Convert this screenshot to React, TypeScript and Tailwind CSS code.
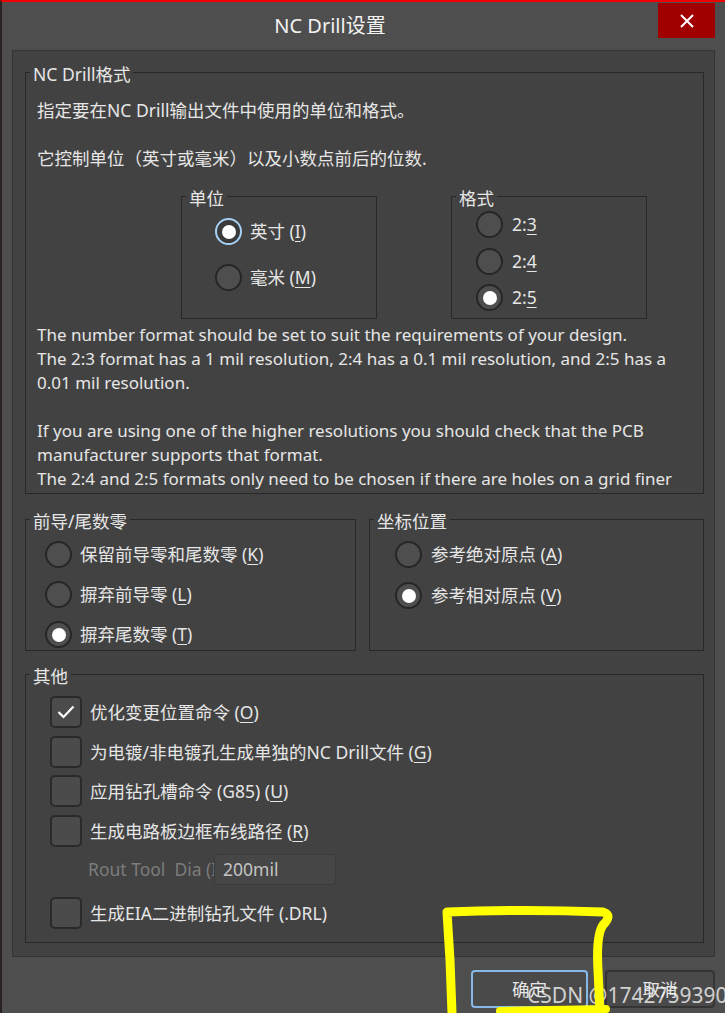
const FONT = "font-['Noto_Sans','Noto_Sans_CJK_SC',sans-serif]";

type Mn = { text: string; k?: string; pre?: string };

const Key = ({ text, k, pre }: Mn) => (
    <span className="whitespace-nowrap">
        {text}
        {k && (
            <>
                {pre ?? " ("}
                <span className="underline underline-offset-[3px] decoration-1">{k}</span>
                {pre === undefined ? ")" : ""}
            </>
        )}
    </span>
);

const Radio = ({ checked, focus }: { checked?: boolean; focus?: boolean }) => (
    <span
        className={`w-[27px] h-[27px] shrink-0 rounded-full border-2 flex items-center justify-center ${
            focus ? "border-[#a6d0f4] bg-[#3a3a3a]" : "border-[#262626] bg-[#4e4e4e]"
        }`}
    >
        {checked && <span className="w-[14px] h-[14px] rounded-full bg-white" />}
    </span>
);

const Check = ({ checked }: { checked?: boolean }) => (
    <span className="w-[32px] h-[32px] shrink-0 rounded-[5px] border-2 border-[#2a2a2a] bg-[#4b4b4b] flex items-center justify-center">
        {checked && (
            <svg width="18" height="14" viewBox="0 0 18 14">
                <polyline points="1.5,7 6.5,12 16.5,1.5" fill="none" stroke="white" strokeWidth="2.2" />
            </svg>
        )}
    </span>
);

// group box: fieldset has no padding so the legend sits 8px from the left edge
const Group = ({
    title,
    className,
    pad,
    children,
}: {
    title: string;
    className: string;
    pad: string;
    children?: React.ReactNode;
}) => (
    <fieldset className={`border border-[#282828] min-w-0 ${className}`}>
        <legend className="ml-[4px] px-[3px] text-[17.5px] leading-[20px] relative top-[2px]">{title}</legend>
        <div className={pad}>{children}</div>
    </fieldset>
);

export default function App() {
    return (
        <div
            className={`relative w-[725px] h-[1013px] overflow-hidden bg-[#4e4e4e] border-t-2 border-t-[#f00000] border-l-2 border-l-[#2a2222] text-[#e6e6e6] ${FONT}`}
        >
            {/* title bar */}
            <div className="flex h-[48px]">
                <div className="flex-1 flex items-center justify-center text-[20px] text-[#f2f2f2]">NC Drill设置</div>
                <button className="mt-[1px] mr-[10px] w-[57px] h-[35px] bg-[#a10000] flex items-center justify-center">
                    <svg width="14" height="14" viewBox="0 0 14 14">
                        <path d="M1 1L13 13M13 1L1 13" stroke="white" strokeWidth="2" />
                    </svg>
                </button>
            </div>

            {/* main panel */}
            <div className="ml-[10px] mr-[10px] h-[907px] bg-[#424242] border border-[#343434] pl-[12px] pr-[10px] pt-[11px] flex flex-col">
                <Group title="NC Drill格式" className="h-[432px]" pad="px-[11px]">
                    <div className="pt-[16px] text-[17.5px] leading-[24px]">
                        <div>指定要在NC Drill输出文件中使用的单位和格式。</div>
                        <div>&nbsp;</div>
                        <div>它控制单位（英寸或毫米）以及小数点前后的位数.</div>
                    </div>
                    <div className="flex mt-[16px] ml-[144px] gap-[74px] text-[17.5px]">
                        <Group title="单位" className="w-[196px] h-[133px]" pad="pl-[33px]">
                            <div className="flex flex-col gap-[19px] mt-[12px]">
                                <label className="flex items-center gap-[8px] h-[27px]">
                                    <Radio checked focus />
                                    <Key text="英寸" k="I" />
                                </label>
                                <label className="flex items-center gap-[8px] h-[27px]">
                                    <Radio />
                                    <Key text="毫米" k="M" />
                                </label>
                            </div>
                        </Group>
                        <Group title="格式" className="w-[196px] h-[133px]" pad="pl-[24px]">
                            <div className="flex flex-col gap-[9.5px] mt-[5px]">
                                {["3", "4", "5"].map((d) => (
                                    <label key={d} className="flex items-center gap-[9px] h-[27px]">
                                        <Radio checked={d === "5"} />
                                        <Key text="2:" k={d} pre="" />
                                    </label>
                                ))}
                            </div>
                        </Group>
                    </div>
                    <div className="mt-[4px] h-[168px] overflow-hidden text-[17px] leading-[24px] whitespace-pre">
                        <div>The number format should be set to suit the requirements of your design.</div>
                        <div>The 2:3 format has a 1 mil resolution, 2:4 has a 0.1 mil resolution, and 2:5 has a</div>
                        <div>0.01 mil resolution.</div>
                        <div> </div>
                        <div>If you are using one of the higher resolutions you should check that the PCB</div>
                        <div>manufacturer supports that format.</div>
                        <div>The 2:4 and 2:5 formats only need to be chosen if there are holes on a grid finer</div>
                    </div>
                </Group>

                <div className="flex gap-[13px] mt-[15px] text-[17.5px]">
                    <Group title="前导/尾数零" className="w-[331px] h-[142px]" pad="pl-[19px]">
                        <div className="flex flex-col gap-[13px] mt-[12px]">
                            <label className="flex items-center gap-[8px] h-[27px]">
                                <Radio />
                                <Key text="保留前导零和尾数零" k="K" />
                            </label>
                            <label className="flex items-center gap-[8px] h-[27px]">
                                <Radio />
                                <Key text="摒弃前导零" k="L" />
                            </label>
                            <label className="flex items-center gap-[8px] h-[27px]">
                                <Radio checked />
                                <Key text="摒弃尾数零" k="T" />
                            </label>
                        </div>
                    </Group>
                    <Group title="坐标位置" className="flex-1 h-[142px]" pad="pl-[25px]">
                        <div className="flex flex-col gap-[14px] mt-[12px]">
                            <label className="flex items-center gap-[9px] h-[27px]">
                                <Radio />
                                <Key text="参考绝对原点" k="A" />
                            </label>
                            <label className="flex items-center gap-[9px] h-[27px]">
                                <Radio checked />
                                <Key text="参考相对原点" k="V" />
                            </label>
                        </div>
                    </Group>
                </div>

                <Group title="其他" className="mt-[13px] h-[279px] text-[17.5px]" pad="pl-[24px]">
                    <div className="flex flex-col mt-[12px]">
                        <label className="flex items-center gap-[8px]">
                            <Check checked />
                            <Key text="优化变更位置命令" k="O" />
                        </label>
                        <label className="flex items-center gap-[8px] mt-[8px]">
                            <Check />
                            <Key text="为电镀/非电镀孔生成单独的NC Drill文件" k="G" />
                        </label>
                        <label className="flex items-center gap-[8px] mt-[7px]">
                            <Check />
                            <Key text="应用钻孔槽命令 (G85)" k="U" />
                        </label>
                        <label className="flex items-center gap-[8px] mt-[8px]">
                            <Check />
                            <Key text="生成电路板边框布线路径" k="R" />
                        </label>
                        <div className="flex items-center mt-[7px] ml-[38px] h-[31px]">
                            <span className="w-[126px] overflow-hidden whitespace-pre text-[#7c7c7c]">Rout Tool  Dia (I)</span>
                            <span className="w-[122px] h-[31px] rounded-[4px] bg-[#464646] border border-[#3a3a3a] pl-[8px] flex items-center text-[#c4c4c4]">
                                200mil
                            </span>
                        </div>
                        <label className="flex items-center gap-[8px] mt-[12px]">
                            <Check />
                            <span>生成EIA二进制钻孔文件 (.DRL)</span>
                        </label>
                    </div>
                </Group>
            </div>

            {/* buttons */}
            <div className="flex justify-end gap-[17px] mr-[10px] mt-[13px] text-[17.5px]">
                <button className="w-[117px] h-[38px] rounded-[4px] border-2 border-[#86b8e6] bg-[#4a4a4a] text-[#e6e6e6]">确定</button>
                <button className="w-[110px] h-[38px] rounded-[4px] border-2 border-[#343434] bg-[#4a4a4a] text-[#e6e6e6]">取消</button>
            </div>

            {/* watermark */}
            <div className="absolute left-[525px] top-[980px] text-[21px] leading-[26px] text-white/75 whitespace-nowrap">
                CSDN @1742759390
            </div>

            {/* yellow marker annotation */}
            <svg className="absolute -left-[2px] -top-[2px] pointer-events-none" width="725" height="1013" viewBox="0 0 725 1013">
                <path
                    d="M452 1013 L450 960 L447 912 Q525 909 603 912 Q613 915 603 925 Q596 935 598 970 L600 1013"
                    fill="none"
                    stroke="#ffff00"
                    strokeWidth="9"
                    strokeLinecap="round"
                    strokeLinejoin="round"
                />
                <path d="M500 1011 L606 1009" fill="none" stroke="#ffff00" strokeWidth="8" strokeLinecap="round" />
            </svg>
        </div>
    );
}
